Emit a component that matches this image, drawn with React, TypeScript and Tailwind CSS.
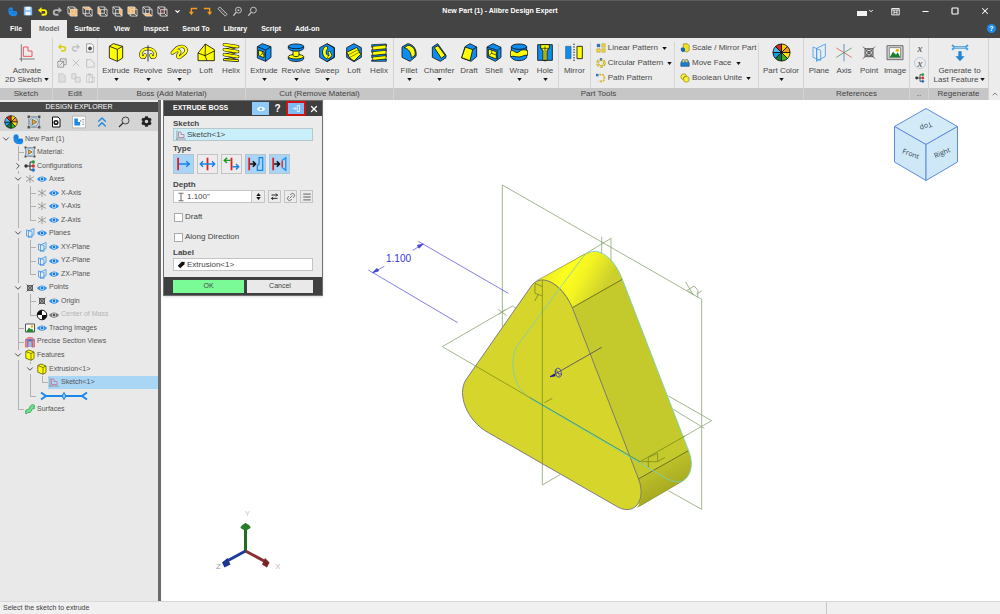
import React, { type ReactNode } from "react";
import { ChevronDown, ChevronRight, ChevronUp, ChevronsUp, Link2, Menu, Minus, Square, X } from "lucide-react";
import { FaCog } from "react-icons/fa";

const Y = "#ffff00";
const B = "#0d8df0";
const K = "#111";

/* ---------- large ribbon icons ---------- */

function Big({ children }: { children: ReactNode }) {
  return (
    <svg viewBox="0 0 54 57" className="w-[18px] h-[19px] shrink-0" fill="none" stroke={K} strokeWidth="2.5" strokeLinejoin="round">
      {children}
    </svg>
  );
}

const tube = (d: string, outer = 13, inner = 8, color = Y) => (
  <>
    <path d={d} stroke={K} strokeWidth={outer} strokeLinecap="round" />
    <path d={d} stroke={color} strokeWidth={inner} strokeLinecap="round" />
  </>
);

const icons = {
  sketch: (
    <Big>
      <path d="M10 4V56M4 48H50" stroke="#666" />
      <path d="M16 12H30V24H42V40H16Z" stroke="#e8555e" strokeWidth="3" />
    </Big>
  ),
  extrude: (
    <Big>
      <path d="M7 10L19 2L47 10V45L31 55L7 45Z" fill={Y} />
      <path d="M7 10L31 19V55M31 19L47 10" />
    </Big>
  ),
  revolve: (
    <Big>
      {tube("M18 36C18 47 5 45 5 34C8 11 46 11 49 34C49 45 36 47 36 36", 10, 7)}
      <path d="M27 7V55" strokeWidth="2.5" />
    </Big>
  ),
  sweep: (
    <Big>
      {tube("M7 30L19 23C28 20 32 27 26 33C20 40 26 48 32 41L46 29C52 18 44 10 36 10C26 10 16 16 7 30", 10, 7)}
    </Big>
  ),
  loft: (
    <Big>
      <path d="M3 30L25 3L52 20V53H3Z" fill={Y} />
      <path d="M3 30L24 38L30 53M24 38L52 24M25 3V20L24 38" />
    </Big>
  ),
  helix: (
    <Big>
      <path d="M47 11L8 21M47 26L8 36M47 41L8 51" stroke={K} strokeWidth="7" />
      <path d="M47 11L8 21M47 26L8 36M47 41L8 51" stroke={Y} strokeWidth="3" />
      {tube("M7 5L47 11", 10, 7)}
      {tube("M7 20L47 26", 10, 7)}
      {tube("M7 35L47 41", 10, 7)}
      {tube("M7 50L47 53", 8, 4)}
    </Big>
  ),
  cutExtrude: (
    <Big>
      <path d="M7 11L22 2L48 11V43L32 55L7 45Z" fill={B} />
      <path d="M7 11L32 21V55M32 21L48 11" />
      <path d="M11 21L27 27V44L11 38Z" fill={Y} />
      <path d="M16 37L22 32M22 26V32L27 34" strokeWidth="2" />
    </Big>
  ),
  cutRevolve: (
    <Big>
      <path d="M4 42V48C10 58 44 58 50 48V42Z" fill={B} />
      <ellipse cx="27" cy="41" rx="23" ry="7" fill={Y} />
      <path d="M18 22V38C22 42 32 42 36 38V22Z" fill={Y} />
      <path d="M4 10V17C10 27 44 27 50 17V10Z" fill={B} />
      <ellipse cx="27" cy="10" rx="23" ry="7" fill={B} />
    </Big>
  ),
  cutSweep: (
    <Big>
      <path d="M5 14L27 2L49 14V43L27 56L5 43Z" fill={B} />
      {tube("M24 15C15 25 18 41 32 43", 12, 8)}
      {tube("M34 28L38 37L32 43", 8, 5)}
      <path d="M27 2L49 14V43L27 56" />
    </Big>
  ),
  cutLoft: (
    <Big>
      <path d="M5 14L27 2L49 14V43L27 56L5 43Z" fill={B} />
      <path d="M5 28L36 13L47 34L27 54L14 45Z" fill={Y} />
      <path d="M9 36L40 20M13 44L44 27" strokeWidth="1.5" />
    </Big>
  ),
  cutHelix: (
    <Big>
      <path d="M5 5L49 3V11L5 13ZM5 20L49 17V25L5 28ZM5 36L49 33V41L5 44ZM5 51L49 48V55H5Z" fill={B} strokeWidth="2" />
      <path d="M8 10L48 6V17L8 21ZM8 26L48 22V33L8 37ZM8 42L48 38V48L8 52Z" fill={Y} strokeWidth="2" />
    </Big>
  ),
  fillet: (
    <Big>
      <path d="M6 12L23 2C41 4 51 20 48 40L30 55L6 43Z" fill={B} />
      <path d="M12 14L24 7C38 8 48 20 45 37L34 45C34 29 26 17 12 14Z" fill={Y} />
    </Big>
  ),
  chamfer: (
    <Big>
      <path d="M7 12L23 2L48 37V44L31 55L7 43Z" fill={B} />
      <path d="M13 14L24 8L45 37L34 46Z" fill={Y} />
    </Big>
  ),
  draft: (
    <Big>
      <path d="M15 11L30 2L50 12V41L33 55L5 45Z" fill={B} />
      <path d="M16 12L38 20L30 53L5 44Z" fill={Y} />
      <path d="M38 20L50 12" />
    </Big>
  ),
  shell: (
    <Big>
      <path d="M6 12L24 2L48 13V43L31 55L6 43Z" fill={B} />
      <path d="M6 12L38 22V51M38 22L48 13" strokeWidth="2" />
      <path d="M10 18L34 26V48L10 39Z" fill={Y} />
      <path d="M10 39L20 31L34 36M20 31V22" strokeWidth="2" />
    </Big>
  ),
  wrap: (
    <Big>
      <path d="M4 12V44C12 56 42 56 50 44V12Z" fill={B} />
      <path d="M1 25C10 16 17 36 27 26C37 18 42 20 53 23V37C43 34 37 42 27 42C17 42 10 38 1 41Z" fill={Y} />
      <ellipse cx="27" cy="11" rx="23" ry="8" fill={B} />
    </Big>
  ),
  hole: (
    <Big>
      <path d="M5 5H49V52H5Z" fill={B} />
      <path d="M14 5H40V16L33 22V52H21V22L14 16Z" fill={Y} />
      <path d="M14 16H40M27 10V56" strokeWidth="2" />
    </Big>
  ),
  mirror: (
    <Big>
      <path d="M2 10H18V47H2Z" fill={B} stroke="#3b6f99" />
      <path d="M36 10H52V47H36Z" fill={Y} />
      <path d="M27 2V57" strokeDasharray="4 4" strokeWidth="3" />
    </Big>
  ),
  plane: (
    <Big>
      <path d="M9 12L32 22V52L9 43ZM20 16L46 3V40L20 55ZM20 16V55" stroke="#3d9cf0" />
    </Big>
  ),
  axis: (
    <Big>
      <path d="M27 3V55" stroke="#3b83bd" />
      <path d="M4 15L50 43" stroke="#de5a50" />
      <path d="M50 15L4 43" stroke="#4f9b6a" />
    </Big>
  ),
  point: (
    <Big>
      <path d="M9 11L45 47M45 11L9 47M15 17H39V41H15Z" stroke="#444" />
      <circle cx="27" cy="29" r="10" stroke="#444" />
      <circle cx="27" cy="29" r="4" stroke="#444" />
    </Big>
  ),
  image: (
    <Big>
      <path d="M3 8H51V50H3Z" fill="#d4d4d4" stroke="#555" />
      <path d="M10 14H44V44H10Z" fill="#fff" stroke="#777" />
      <path d="M11 43L21 26L30 35L35 28L43 43Z" fill="#16802b" stroke="none" />
      <circle cx="34" cy="22" r="5" fill="#f3b400" stroke="none" />
    </Big>
  ),
  generate: (
    <Big>
      <path d="M3 6L10 12H44L51 6M3 20L10 14H44L51 20" stroke="#4f9fdc" strokeWidth="6" />
      <path d="M11 13H43" stroke="#a9d3f2" strokeWidth="3" />
      <path d="M22 25H32V40H41L27 55L13 40H22Z" fill="#2584d5" stroke="none" />
    </Big>
  ),
};

function Wheel({ className }: { className: string }) {
  const colors = ["#f4d400", "#f59a1b", "#ffe100", "#40b020", "#0f7a38", "#149ae0", "#4cb9ec", "#d2271b"];
  return (
    <svg viewBox="-10 -10 20 20" className={className} stroke={K} strokeWidth="0.9">
      {colors.map((c, i) => (
        <path key={i} d="M0 0L0 -9A9 9 0 0 1 6.36 -6.36Z" fill={c} transform={`rotate(${i * 45})`} />
      ))}
    </svg>
  );
}

/* ---------- small icons, 12 unit grid ---------- */

function Sm({ children, className = "w-3 h-3" }: { children: ReactNode; className?: string }) {
  return (
    <svg viewBox="0 0 12 12" className={`${className} shrink-0`} fill="none" stroke={K} strokeWidth="1" strokeLinejoin="round">
      {children}
    </svg>
  );
}

const PartLogo = ({ className }: { className?: string }) => (
  <Sm className={className}>
    <path d="M1.5 3.5C2 1 5.5 .5 6.5 3V5.5L10 5.5C12 7 11.5 10.5 9 11.2L5 11C2.5 10 1.5 8 1.5 6Z" fill="#1e88e5" stroke="none" />
    <path d="M2 4.2C4 5.2 5.5 4.5 6.5 3.4M5.5 7C7 8 9 7.5 10.5 6.2" stroke="#0d62b8" strokeWidth=".6" />
  </Sm>
);

const Undo = ({ color, className }: { color: string; className?: string }) => (
  <Sm className={className}>
    <path d="M3 4.5H7.5C11 4.5 11 9.5 7.5 9.5H5" stroke={color} strokeWidth="2" />
    <path d="M5 1L1 4.5L5 8Z" fill={color} stroke="none" />
  </Sm>
);
const Redo = ({ color, className }: { color: string; className?: string }) => (
  <Sm className={className}>
    <path d="M9 4.5H4.5C1 4.5 1 9.5 4.5 9.5H7" stroke={color} strokeWidth="2" />
    <path d="M7 1L11 4.5L7 8Z" fill={color} stroke="none" />
  </Sm>
);

const cubeFaces = [
  "M3 3H11V11H3Z",
  "M1 1H8L11 4H4Z",
  "M1 1L4 4V11L1 8Z",
  "M8 1L11 4V11L8 8Z",
  "M1 1H9V9H1Z",
  "M1 8H8L11 11H4Z",
  "",
];
const Cube = ({ face }: { face: string }) => (
  <Sm className="w-[11px] h-[11px]">
    <path d={face || "M4 3H8V8H4Z"} fill={face ? "#ffb45a" : "#7d3b40"} stroke="none" />
    <path d="M1 1H8V8H1ZM4 4H11V11H4ZM1 1L4 4M8 1L11 4M1 8L4 11M8 8L11 11" stroke="#dcdcdc" strokeWidth=".9" />
  </Sm>
);

const Material = ({ className }: { className?: string }) => (
  <Sm className={className}>
    <path d="M1.5 1.5H10.5V10.5H1.5Z" stroke="#8b8b8b" strokeWidth=".8" />
    <circle cx="6" cy="6" r="3.8" stroke="#5ba5de" strokeWidth=".8" />
    <path d="M4.5 3.8L8.3 6L4.5 8.2Z" fill="#f0ae2e" stroke="#6d4c10" strokeWidth=".6" />
    <path d="M.5 .5H2.5V2.5H.5ZM9.5 .5H11.5V2.5H9.5ZM.5 9.5H2.5V11.5H.5ZM9.5 9.5H11.5V11.5H9.5Z" fill="#555" stroke="none" />
  </Sm>
);
const Config = ({ className }: { className?: string }) => (
  <Sm className={className}>
    <path d="M2 6H6M8 2H6V10H8M6 6H8" stroke="#333" />
    <circle cx="2" cy="6" r="1.7" fill="#333" stroke="none" />
    <circle cx="9.3" cy="2" r="1.7" fill="#2f9a3c" stroke="none" />
    <circle cx="9.3" cy="6" r="1.7" fill="#d13438" stroke="none" />
    <circle cx="9.3" cy="10" r="1.7" fill="#2374c6" stroke="none" />
  </Sm>
);
const AxisSm = () => (
  <Sm>
    <path d="M6 2V10" stroke="#8a8a8a" strokeWidth=".8" />
    <path d="M2 3.5L10 8.5" stroke="#a07f7f" strokeWidth=".8" />
    <path d="M10 3.5L2 8.5" stroke="#7f9a85" strokeWidth=".8" />
  </Sm>
);
const PlaneSm = () => (
  <Sm>
    <path d="M2.5 3L8 4.5V10.5L2.5 9ZM4.5 4L10 1.5V7.5L4.5 10.5Z" stroke="#3a93e6" strokeWidth=".8" />
  </Sm>
);
const PointSm = () => (
  <Sm>
    <path d="M3.5 3.5H8.5V8.5H3.5ZM2.5 2.5L9.5 9.5M9.5 2.5L2.5 9.5" stroke="#444" strokeWidth=".8" />
    <circle cx="6" cy="6" r="2" stroke="#444" strokeWidth=".7" />
  </Sm>
);
const Mass = () => (
  <Sm>
    <circle cx="6" cy="6" r="4.8" fill="#fff" />
    <path d="M6 6V1.2A4.8 4.8 0 0 0 1.2 6ZM6 6V10.8A4.8 4.8 0 0 0 10.8 6Z" fill={K} stroke="none" />
  </Sm>
);
const ImageSm = () => (
  <Sm>
    <path d="M1.5 2H10.5V10H1.5Z" fill="#fff" stroke="#555" />
    <path d="M2 10L5 5.5L7 7.5L8 6.5L10 10Z" fill="#1c8b31" stroke="none" />
    <circle cx="8" cy="4.5" r="1.2" fill="#f3a400" stroke="none" />
  </Sm>
);
const SectionSm = () => (
  <Sm>
    <path d="M1.5 11V4C3 .5 9 .5 10.5 4V11H8V5H4V11Z" fill="#ef8b91" stroke="#d2525a" strokeWidth=".7" />
    <path d="M4 11V4H8V11M6 3V11M1.5 4H10.5" stroke="#3a6fd0" strokeWidth=".8" />
  </Sm>
);
const FeatureSm = () => (
  <Sm>
    <path d="M1.8 2.5L5 1L10 3V9.5L7 11.3L1.8 9.2Z" fill={Y} stroke="#5d5a08" strokeWidth=".8" />
    <path d="M1.8 2.5L7 4.5V11.3M7 4.5L10 3" stroke="#5d5a08" strokeWidth=".8" />
  </Sm>
);
const SketchSm = () => (
  <Sm>
    <path d="M2 1.5V11M1 10H11" stroke="#8a8a8a" strokeWidth=".8" />
    <path d="M3.5 3H6V5.5H9V8.5H3.5Z" stroke="#c77a9c" strokeWidth=".9" />
  </Sm>
);
const SurfaceSm = () => (
  <Sm>
    <path d="M1.5 8C2.5 5.5 4.5 7.5 5.5 5C6.5 1.5 9 1 10.5 2.5L10 6C9 5 8 5.5 7.5 8C6 10.5 4 8.5 2 11Z" fill="#6fe08b" stroke="#2b9a4a" strokeWidth=".8" />
  </Sm>
);
const Sheet = ({ x }: { x?: boolean }) => (
  <Sm className="w-[10px] h-[10px]">
    <path d="M2 1H8L10 3V11H2Z" stroke={x ? "#888" : "#c8c8c8"} fill={x ? "#fff" : "#dedede"} />
    {x && <circle cx="6" cy="6.5" r="1.8" fill="#555" stroke="#333" />}
  </Sm>
);
const EyeSm = ({ dim }: { dim?: boolean }) => (
  <Sm>
    <path d="M1 6C3.5 2.5 8.5 2.5 11 6C8.5 9.5 3.5 9.5 1 6Z" fill={dim ? "#777" : "#2f8fec"} stroke="none" />
    <circle cx="6" cy="6" r="2.1" fill="#e6f2fc" stroke="none" />
    <circle cx="6" cy="6" r="1.4" fill={dim ? "#555" : "#1877d6"} stroke="none" />
  </Sm>
);

const Caret = () => (
  <svg viewBox="0 0 6 4" className="w-[5px] h-[3px] shrink-0" fill="#111">
    <path d="M0 0H6L3 4Z" />
  </svg>
);

/* ---------- ribbon ---------- */

type Tool = { label: string; icon: ReactNode; width: string; menu?: boolean };

const boss: Tool[] = [
  { label: "Extrude", icon: icons.extrude, width: "w-8", menu: true },
  { label: "Revolve", icon: icons.revolve, width: "w-8", menu: true },
  { label: "Sweep", icon: icons.sweep, width: "w-[30px]", menu: true },
  { label: "Loft", icon: icons.loft, width: "w-6" },
  { label: "Helix", icon: icons.helix, width: "w-[26px]" },
];
const cut: Tool[] = [
  { label: "Extrude", icon: icons.cutExtrude, width: "w-8", menu: true },
  { label: "Revolve", icon: icons.cutRevolve, width: "w-8", menu: true },
  { label: "Sweep", icon: icons.cutSweep, width: "w-[30px]", menu: true },
  { label: "Loft", icon: icons.cutLoft, width: "w-6" },
  { label: "Helix", icon: icons.cutHelix, width: "w-[26px]" },
];
const partTools: Tool[] = [
  { label: "Fillet", icon: icons.fillet, width: "w-[26px]", menu: true },
  { label: "Chamfer", icon: icons.chamfer, width: "w-[34px]", menu: true },
  { label: "Draft", icon: icons.draft, width: "w-[26px]" },
  { label: "Shell", icon: icons.shell, width: "w-6" },
  { label: "Wrap", icon: icons.wrap, width: "w-[26px]", menu: true },
  { label: "Hole", icon: icons.hole, width: "w-[26px]", menu: true },
];
const references: Tool[] = [
  { label: "Plane", icon: icons.plane, width: "w-[26px]" },
  { label: "Axis", icon: icons.axis, width: "w-6" },
  { label: "Point", icon: icons.point, width: "w-[26px]" },
  { label: "Image", icon: icons.image, width: "w-[26px]" },
];

function ToolButton({ tool }: { tool: Tool }) {
  return (
    <button className={`${tool.width} shrink-0 flex flex-col items-center hover:bg-sky-100`}>
      {tool.icon}
      <span className="mt-1 leading-[9px] whitespace-nowrap">{tool.label}</span>
      <span className="h-[9px] flex items-center">{tool.menu && <Caret />}</span>
    </button>
  );
}

function Group({ label, width, children }: { label: string; width: string; children: ReactNode }) {
  return (
    <section className={`${width} shrink-0 flex flex-col border-r border-[#d3d3d3]`}>
      <div className="flex-1 flex pt-[5px] pl-[2px]">{children}</div>
      <h2 className="h-3 bg-[#c6c6c6] text-center leading-[12px] text-[#444]">{label}</h2>
    </section>
  );
}

function ListTools({ items, width }: { items: { label: string; icon: ReactNode; menu?: boolean }[]; width: string }) {
  return (
    <div className={`${width} flex flex-col gap-[3px] pl-[5px] -mt-px border-l border-[#d6d6d6]`}>
      {items.map((it) => (
        <button key={it.label} className="h-3 flex items-center whitespace-nowrap">
          {it.icon}
          <span className="ml-[2px] mr-1">{it.label}</span>
          {it.menu && <Caret />}
        </button>
      ))}
    </div>
  );
}

const patterns = [
  {
    label: "Linear Pattern",
    menu: true,
    icon: <Sm className="w-[10px] h-[10px]"><path d="M1 1H5V5H1Z" fill="#2d72c4" stroke="none" /><path d="M7 1H11V5H7ZM1 7H5V11H1ZM7 7H11V11H7Z" fill="#f5dc3c" stroke="#a88d1a" strokeWidth=".6" /></Sm>,
  },
  {
    label: "Circular Pattern",
    menu: true,
    icon: <Sm className="w-[10px] h-[10px]"><circle cx="6" cy="6" r="4" stroke="#9b8517" strokeWidth="3" strokeDasharray="3 1.2" /><circle cx="6" cy="6" r="4" stroke="#f5e03c" strokeWidth="1.8" strokeDasharray="3 1.2" /><path d="M5 0H7V3H5Z" fill="#2d72c4" stroke="none" /></Sm>,
  },
  {
    label: "Path Pattern",
    icon: <Sm className="w-[10px] h-[10px]"><path d="M4 2H7C11 2 11 10 7 10H3" stroke="#d9b32c" strokeWidth="2.2" strokeDasharray="2.4 1" /><path d="M0 1H3V4H0Z" fill="#2d72c4" stroke="none" /></Sm>,
  },
];
const modify = [
  {
    label: "Scale / Mirror Part",
    icon: <Sm className="w-[10px] h-[10px]"><path d="M4 1L9 1L11 3V9L8 11L4 9Z" fill="#f1e21d" stroke="#7a7510" strokeWidth=".7" /><path d="M1 6L4 5L6 7V10L3 11L1 9Z" fill="#1767b8" stroke="none" /></Sm>,
  },
  {
    label: "Move Face",
    menu: true,
    icon: <Sm className="w-[10px] h-[10px]"><path d="M1 6L3 2H5V5H7V2H9L11 6V10H1Z" fill="#1c7dd0" stroke="#15406e" strokeWidth=".7" /><path d="M3 2H5V5H3ZM7 2H9V5H7Z" fill="#f2d64a" stroke="none" /></Sm>,
  },
  {
    label: "Boolean Unite",
    menu: true,
    icon: <Sm className="w-[10px] h-[10px]"><circle cx="4.5" cy="4.5" r="3.5" fill="#f8f03a" stroke="#8d8612" strokeWidth=".8" /><circle cx="7.5" cy="7.5" r="3.5" fill="#f8f03a" stroke="#8d8612" strokeWidth=".8" /><path d="M4 7.5C4 5.5 5.5 4 7.5 4" stroke="#8d8612" strokeWidth=".8" /></Sm>,
  },
];

const editIcons = [
  <Undo color="#d6cf1b" className="w-[10px] h-[10px]" />,
  <Redo color="#c4c4c4" className="w-[10px] h-[10px]" />,
  <Sheet x />,
  <Sm className="w-[10px] h-[10px]"><path d="M1 4H8V11H1ZM4 4V1H11V8H8M3 9L9 3" stroke="#8c8c8c" /></Sm>,
  <Sm className="w-[10px] h-[10px]"><path d="M2 2L10 10M10 2L2 10" stroke="#bbb" /></Sm>,
  <Sm className="w-[10px] h-[10px]"><path d="M2 1V11H11V6L7 2H2" stroke="#bbb" /></Sm>,
  <Sheet />,
  <Sm className="w-[10px] h-[10px]"><path d="M1 1H6V7H1ZM5 5H11V11H5Z" stroke="#c4c4c4" fill="#e2e2e2" /></Sm>,
  <Sm className="w-[10px] h-[10px]"><path d="M2 2H9V11H2ZM4 1H7V3H4ZM5 5H11V11H5Z" stroke="#c4c4c4" fill="#eee" /></Sm>,
];

function Ribbon() {
  return (
    <div className="h-[62px] flex bg-[#ececec] text-[8px] text-[#4a4a4a]">
      <Group label="Sketch" width="w-[53px]">
        <button className="flex-1 flex flex-col items-center">
          {icons.sketch}
          <span className="mt-1 leading-[9px]">Activate</span>
          <span className="leading-[9px] flex items-center gap-[2px] whitespace-nowrap">2D Sketch <Caret /></span>
        </button>
      </Group>
      <Group label="Edit" width="w-[45px]">
        <div className="flex-1 -mt-px grid grid-cols-3 auto-rows-[12px] gap-y-[3px] justify-items-center items-center">
          {editIcons.map((icon, i) => (
            <button key={i} aria-label={`Edit tool ${i + 1}`}>{icon}</button>
          ))}
        </div>
      </Group>
      <Group label="Boss (Add Material)" width="w-[148px]">
        {boss.map((t) => <ToolButton key={t.label} tool={t} />)}
      </Group>
      <Group label="Cut (Remove Material)" width="w-[148px]">
        {cut.map((t) => <ToolButton key={t.label} tool={t} />)}
      </Group>
      <Group label="Part Tools" width="w-[410px]">
        {partTools.map((t) => <ToolButton key={t.label} tool={t} />)}
        <div className="w-8 flex justify-center border-l border-[#d6d6d6]">
          <ToolButton tool={{ label: "Mirror", icon: icons.mirror, width: "w-[30px]" }} />
        </div>
        <ListTools items={patterns} width="w-[85px]" />
        <ListTools items={modify} width="w-[84px]" />
        <div className="flex-1 flex justify-center border-l border-[#d6d6d6]">
          <ToolButton tool={{ label: "Part Color", icon: <Wheel className="w-[19px] h-[19px]" />, width: "w-[44px]", menu: true }} />
        </div>
      </Group>
      <Group label="References" width="w-[106px]">
        {references.map((t) => <ToolButton key={t.label} tool={t} />)}
      </Group>
      <Group label=".." width="w-[19px]">
        <div className="flex-1 flex flex-col items-center gap-[3px] -mt-px font-['Liberation_Serif',serif] italic text-[11px] leading-[11px]">
          <button className="h-3">x</button>
          <button className="w-3 h-3 rounded-full border border-[#bcd] leading-[8px]">x</button>
          <button className="h-3" aria-label="Configurations"><Config className="w-[10px] h-[10px]" /></button>
        </div>
      </Group>
      <Group label="Regenerate" width="w-[60px]">
        <button className="flex-1 flex flex-col items-center">
          {icons.generate}
          <span className="mt-1 leading-[9px]">Generate to</span>
          <span className="leading-[9px] flex items-center gap-[2px] whitespace-nowrap">Last Feature <Caret /></span>
        </button>
      </Group>
      <button className="flex-1 flex items-end justify-center pb-[2px]" aria-label="Collapse ribbon">
        <ChevronUp size={8} />
      </button>
    </div>
  );
}

/* ---------- title bar and tabs ---------- */

function TitleBar() {
  return (
    <header className="h-5 grid grid-cols-[1fr_auto_1fr] items-center bg-[#444] text-white border-t border-[#5c5c5c]">
      <div className="flex items-center pl-[5px] [&>*]:w-[15px] [&>*]:flex [&>*]:justify-center">
        <span><PartLogo className="w-[11px] h-[11px]" /></span>
        <button aria-label="Save"><Sm className="w-[10px] h-[10px]"><path d="M1 1H10L11 2V11H1Z" fill="#7cbcf0" stroke="none" /><path d="M3 1H9V5H3ZM3 7H9V11H3Z" fill="#eaf4fc" stroke="none" /></Sm></button>
        <button aria-label="Undo"><Undo color="#ffee00" className="w-[11px] h-[11px]" /></button>
        <button aria-label="Redo"><Redo color="#b5b5b5" className="w-[11px] h-[11px]" /></button>
        {cubeFaces.map((f, i) => <button key={i} aria-label={`View ${i + 1}`}><Cube face={f} /></button>)}
        <button aria-label="More views"><ChevronDown size={7} strokeWidth={4} /></button>
        <button aria-label="Previous"><Sm className="w-[10px] h-[10px]"><path d="M11 3H4V9" stroke="#f59a1c" strokeWidth="1.6" /><path d="M1 7H7L4 11Z" fill="#f59a1c" stroke="none" /></Sm></button>
        <button aria-label="Next"><Sm className="w-[10px] h-[10px]"><path d="M1 3H8V9" stroke="#f59a1c" strokeWidth="1.6" /><path d="M5 7H11L8 11Z" fill="#f59a1c" stroke="none" /></Sm></button>
        <button aria-label="Measure"><Sm className="w-[11px] h-[11px]"><path d="M3 1L11 9L9 11L1 3Z" stroke="#ccc" /><path d="M4 4L5 3M6 6L7 5M8 8L9 7" stroke="#ccc" strokeWidth=".8" /></Sm></button>
        <button aria-label="Zoom fit"><Sm className="w-[11px] h-[11px]"><circle cx="7" cy="4.5" r="3.2" stroke="#ccc" /><circle cx="7" cy="4.5" r="1" fill="#ccc" stroke="none" /><path d="M4.5 7L1.5 10.5" stroke="#ccc" strokeWidth="1.4" /></Sm></button>
        <button aria-label="Zoom"><Sm className="w-[11px] h-[11px]"><circle cx="7" cy="4.5" r="3.2" stroke="#ccc" /><path d="M4.5 7L1.5 10.5" stroke="#ccc" strokeWidth="1.4" /></Sm></button>
      </div>
      <h1 className="text-[7px] font-bold leading-5">New Part (1) - Alibre Design Expert</h1>
      <div className="flex justify-end [&>*]:w-[30px] [&>*]:flex [&>*]:justify-center [&>*]:items-center">
        <button aria-label="Display">
          <span className="w-[10px] h-[5px] mt-1 bg-[#f2f2f2]" />
          <ChevronDown size={6} strokeWidth={4} className="ml-px" />
        </button>
        <button aria-label="Ribbon options"><Sm className="w-[9px] h-[9px]"><path d="M1 2H11V10.5H1ZM1 4H11M4 4V10M8 4V10M4 7H8" stroke="#eee" strokeWidth="1.3" /></Sm></button>
        <button aria-label="Minimize"><Minus size={9} strokeWidth={3} /></button>
        <button aria-label="Maximize"><Square size={8} strokeWidth={3.5} /></button>
        <button aria-label="Close"><X size={10} strokeWidth={2.5} /></button>
      </div>
    </header>
  );
}

const tabs = ["File", "Model", "Surface", "View", "Inspect", "Send To", "Library", "Script", "Add-on"];

function Tabs() {
  return (
    <nav className="h-[18px] flex bg-[#444] pl-[3px] text-[7px] font-bold">
      {tabs.map((t) => (
        <button key={t} className={t === "Model" ? "ml-[2px] px-2 bg-[#ececec] text-[#666]" : "px-[7px] text-white"}>
          {t}
        </button>
      ))}
      <button className="ml-auto mt-1 mr-[4px] w-[9px] h-[9px] rounded-full bg-[#1e8be6] text-white leading-[9px]" aria-label="Help">?</button>
    </nav>
  );
}

/* ---------- design explorer ---------- */

// guides: one letter per indent column
// v = line through, t = tee, l = last branch
// r = root node, o = open node, c = closed node
type Row = { guides: string; label: string; icon: ReactNode; eye?: "on" | "dim"; selected?: boolean };

const rows: Row[] = [
  { guides: "r", label: "New Part (1)", icon: <PartLogo /> },
  { guides: " t", label: "Material:", icon: <Material /> },
  { guides: " c", label: "Configurations", icon: <Config /> },
  { guides: " o", label: "Axes", icon: <AxisSm />, eye: "on" },
  { guides: " vt", label: "X-Axis", icon: <AxisSm />, eye: "on" },
  { guides: " vt", label: "Y-Axis", icon: <AxisSm />, eye: "on" },
  { guides: " vl", label: "Z-Axis", icon: <AxisSm />, eye: "on" },
  { guides: " o", label: "Planes", icon: <PlaneSm />, eye: "on" },
  { guides: " vt", label: "XY-Plane", icon: <PlaneSm />, eye: "on" },
  { guides: " vt", label: "YZ-Plane", icon: <PlaneSm />, eye: "on" },
  { guides: " vl", label: "ZX-Plane", icon: <PlaneSm />, eye: "on" },
  { guides: " o", label: "Points", icon: <PointSm />, eye: "on" },
  { guides: " vt", label: "Origin", icon: <PointSm />, eye: "on" },
  { guides: " vl", label: "Center of Mass", icon: <Mass />, eye: "dim" },
  { guides: " t", label: "Tracing Images", icon: <ImageSm />, eye: "on" },
  { guides: " t", label: "Precise Section Views", icon: <SectionSm /> },
  { guides: " o", label: "Features", icon: <FeatureSm /> },
  { guides: " vo", label: "Extrusion<1>", icon: <FeatureSm /> },
  { guides: " vvl", label: "Sketch<1>", icon: <SketchSm />, selected: true },
  {
    guides: " vl",
    label: "",
    icon: (
      <svg viewBox="0 0 48 12" className="w-12 h-3 ml-1" stroke="#1787ea" strokeWidth="2" fill="none">
        <path d="M6 6H42M1 2.5L6 6L1 9.5M47 2.5L42 6L47 9.5" />
        <path d="M24 2.5L26 6L24 9.5L22 6Z" fill="#7cc0f8" strokeWidth="1" />
      </svg>
    ),
  },
  { guides: " l", label: "Surfaces", icon: <SurfaceSm /> },
];

function Guide({ kind }: { kind: string }) {
  const Chevron = kind === "c" ? ChevronRight : ChevronDown;
  return (
    <span className="w-3 shrink-0 flex flex-col items-center relative">
      {"vt".includes(kind) && <span className="flex-1 w-px bg-[#b0b0b0]" />}
      {kind === "l" && <span className="h-1/2 w-px bg-[#b0b0b0]" />}
      {"tl".includes(kind) && <span className="absolute top-1/2 left-[6px] w-[6px] h-px bg-[#b0b0b0]" />}
      {kind === "r" && <ChevronDown size={10} className="my-auto text-[#333]" />}
      {"oc".includes(kind) && (
        <>
          <span className="flex-1 w-px bg-[#b0b0b0]" />
          <Chevron size={10} className="text-[#333]" />
          <span className="flex-1 w-px bg-[#b0b0b0]" />
        </>
      )}
    </span>
  );
}

const explorerTools = [
  <Wheel className="w-[14px] h-[14px]" />,
  <Material className="w-[14px] h-[14px]" />,
  <Sm><path d="M2.5 1H8L10 3V11H2.5Z" fill="#fff" /><circle cx="6" cy="6.5" r="1.8" strokeWidth="1.5" /></Sm>,
  <Sm className="w-[14px] h-[14px]"><path d="M.5 1H11.5V11H.5Z" fill="#fff" stroke="#999" strokeWidth=".5" /><path d="M2 3H5V6H7V9H2Z" fill="#1e88e5" stroke="none" /><path d="M7 5H8M9 4H10M9 6H10M9 8H10" stroke="#777" /></Sm>,
  <ChevronsUp size={16} className="text-[#1e88e5]" />,
  <Sm><circle cx="7.5" cy="4.5" r="3.5" stroke="#333" strokeWidth=".9" /><path d="M5 7L1 11" stroke="#333" strokeWidth="1.3" /></Sm>,
  <FaCog size={11} />,
];

function Explorer() {
  return (
    <aside className="w-[161px] shrink-0 flex flex-col bg-[#e9e9e9] border-r-[3px] border-[#6b6b6b] text-[7px] text-[#555]">
      <h2 className="mt-[2px] h-[10px] leading-[10px] bg-[#484848] text-center text-white">DESIGN EXPLORER</h2>
      <div className="h-[19px] flex items-center bg-[#d4d4d4] text-[#222]">
        {explorerTools.map((icon, i) => (
          <button key={i} className="flex-1 flex justify-center" aria-label={`Explorer tool ${i + 1}`}>{icon}</button>
        ))}
      </div>
      <ul className="mt-px h-[284px] flex flex-col">
        {rows.map((r, i) => (
          <li key={i} className="flex-1 flex">
            {r.guides.split("").map((g, j) => <Guide key={j} kind={g} />)}
            <div className={r.selected ? "flex-1 flex items-center bg-[#aad6f5]" : "flex-1 flex items-center"}>
              {r.icon}
              {r.eye && <EyeSm dim={r.eye === "dim"} />}
              <span className={r.eye === "dim" ? "ml-px text-[#b4b4b4] whitespace-nowrap" : "ml-px whitespace-nowrap"}>{r.label}</span>
            </div>
          </li>
        ))}
      </ul>
    </aside>
  );
}

/* ---------- extrude dialog ---------- */

const typeIcons = [
  { label: "To depth", on: true, art: <><path d="M4 3V17" stroke="#e02020" strokeWidth="2" /><path d="M5 10H16M13 7L16.5 10L13 13" stroke="#1684e6" strokeWidth="1.6" /></> },
  { label: "Mid plane", on: false, art: <><path d="M10 3V17" stroke="#e02020" strokeWidth="2" /><path d="M2 10H18M5 7L2 10L5 13M15 7L18 10L15 13" stroke="#1684e6" strokeWidth="1.6" /></> },
  { label: "Two directions", on: false, art: <><path d="M10 3V17" stroke="#e02020" strokeWidth="2" /><path d="M9 6H2M5 3L2 6L5 9" stroke="#159a1d" strokeWidth="1.6" /><path d="M11 13H17M15 10L18 13L15 16" stroke="#1684e6" strokeWidth="1.6" /></> },
  { label: "To geometry", on: true, art: <><path d="M3 3V17" stroke="#e02020" strokeWidth="2" /><path d="M4 10H10M7 7L10 10L7 13" stroke="#111" strokeWidth="1.8" /><path d="M18 3V17H12V12L14 10V3Z" stroke="#1684e6" strokeWidth="1.3" /></> },
  { label: "To next", on: true, art: <><path d="M3 3V17" stroke="#e02020" strokeWidth="2" /><path d="M4 10H10M7 7L10 10L7 13" stroke="#111" strokeWidth="1.8" /><path d="M13 6V14" stroke="#e02020" strokeWidth="1.5" /><path d="M13 6L17 3V17L13 14" stroke="#1684e6" strokeWidth="1.3" /></> },
];

function ExtrudeDialog() {
  return (
    <form
      className="absolute top-0 left-[2px] w-40 border border-[#6f6f6f] bg-[#ebebeb] text-[8px] text-[#444] shadow-sm"
      onSubmit={(e) => e.preventDefault()}
    >
      <div className="h-[15px] flex items-center bg-[#3f3f3f] text-white pl-[9px]">
        <h2 className="flex-1 font-bold text-[7px]">EXTRUDE BOSS</h2>
        <button type="button" className="w-[17px] h-[13px] flex items-center justify-center bg-[#8fcaf8]" aria-label="Preview">
          <Sm className="w-[10px] h-[10px]"><path d="M1 6C3.5 2.5 8.5 2.5 11 6C8.5 9.5 3.5 9.5 1 6Z" fill="#fff" stroke="none" /><circle cx="6" cy="6" r="1.6" fill="#6fb6ee" stroke="none" /></Sm>
        </button>
        <button type="button" className="w-[17px] font-bold text-[10px] leading-[13px]">?</button>
        <button type="button" className="w-5 h-[15px] flex items-center justify-center bg-[#7dbdf5] border-2 border-[#cf1313]" aria-label="Dock">
          <Sm className="w-[11px] h-[9px]"><path d="M1 6H5M3.5 4L5.5 6L3.5 8M7 2H10V10H7Z" stroke="#fff" /></Sm>
        </button>
        <button type="button" className="w-4 flex justify-center" aria-label="Close dialog"><X size={10} strokeWidth={3} /></button>
      </div>

      <div className="px-[9px] pt-1">
        <label htmlFor="sketch" className="block font-bold leading-[8px]">Sketch</label>
        <div className="h-[13px] flex items-center bg-[#c9effb] border border-[#b9c6cc] pl-px">
          <SketchSm />
          <input id="sketch" readOnly defaultValue="Sketch<1>" className="flex-1 min-w-0 bg-transparent outline-none" />
        </div>

        <div className="mt-1 font-bold leading-[8px]">Type</div>
        <div className="mt-px flex gap-[3px]">
          {typeIcons.map((t) => (
            <button key={t.label} type="button" aria-label={t.label} className={t.on ? "w-[21px] h-5 border border-[#b5c4cf] bg-[#a8d4f7]" : "w-[21px] h-5 border border-[#c4c4c4] bg-[#ececec]"}>
              <svg viewBox="0 0 20 20" className="w-full h-full" fill="none">{t.art}</svg>
            </button>
          ))}
        </div>

        <label htmlFor="depth" className="block mt-[7px] font-bold leading-[8px]">Depth</label>
        <div className="mt-px h-[13px] flex gap-[3px]">
          <div className="flex-1 min-w-0 flex items-center border border-[#c4c4c4] bg-white">
            <Sm className="w-[10px] h-[10px] ml-[2px]"><path d="M3 1.5H9M3 10.5H9M6 1.5V10.5" stroke="#555" /></Sm>
            <input id="depth" defaultValue={'1.100"'} className="flex-1 min-w-0 ml-px outline-none" />
            <button type="button" aria-label="Step depth" className="w-[13px] h-full border-l border-[#c4c4c4] bg-[#ececec] flex flex-col items-center justify-evenly">
              <span className="rotate-180"><Caret /></span>
              <Caret />
            </button>
          </div>
          <button type="button" aria-label="Reverse" className="w-[13px] shrink-0 flex items-center justify-center border border-[#c4c4c4]"><Sm className="w-[9px] h-[9px]"><path d="M2 4H10M8 2L10 4L8 6M10 8.5H2M4 6.5L2 8.5L4 10.5" strokeWidth="1.2" /></Sm></button>
          <button type="button" aria-label="Link" className="w-[13px] shrink-0 flex items-center justify-center border border-[#c4c4c4]"><Link2 size={10} className="-rotate-45 text-[#666]" /></button>
          <button type="button" aria-label="Options" className="w-[13px] shrink-0 flex items-center justify-center border border-[#c4c4c4]"><Menu size={10} /></button>
        </div>

        <label className="mt-[9px] h-[10px] flex items-center gap-[2px]">
          <input type="checkbox" className="appearance-none w-[9px] h-[9px] ml-px border border-[#aaa] bg-white checked:bg-sky-500" />
          Draft
        </label>
        <label className="mt-[10px] h-[10px] flex items-center gap-[2px]">
          <input type="checkbox" className="appearance-none w-[9px] h-[9px] ml-px border border-[#aaa] bg-white checked:bg-sky-500" />
          Along Direction
        </label>

        <label htmlFor="label" className="block mt-[7px] font-bold leading-[8px]">Label</label>
        <div className="mt-px h-[13px] flex items-center border border-[#c4c4c4] bg-white pl-[2px]">
          <Sm className="w-[10px] h-[10px]"><path d="M2 7L7 2L10.5 2.5L10 5.5L5 10Z" fill="#111" stroke="none" /></Sm>
          <input id="label" defaultValue="Extrusion<1>" className="flex-1 min-w-0 ml-px outline-none" />
        </div>
      </div>

      <div className="mt-[6px] h-[18px] flex gap-[3px] items-center bg-[#3f3f3f] px-[9px] text-[7px]">
        <button className="flex-1 h-[13px] bg-[#7bfb97]">OK</button>
        <button type="button" className="w-[66px] h-[13px] bg-[#e9e9e9]">Cancel</button>
      </div>
    </form>
  );
}

/* ---------- model view ---------- */

function Viewport() {
  return (
    <main className="relative flex-1 min-w-0 bg-white">
      <svg viewBox="161 100 839 501" className="absolute inset-0 w-full h-full" fill="none">
        <defs>
          <linearGradient id="top" x1="560" y1="290" x2="720" y2="380" gradientUnits="userSpaceOnUse">
            <stop offset="0" stopColor="#eaea22" />
            <stop offset=".35" stopColor="#ffff1e" />
            <stop offset=".6" stopColor="#f3f322" />
            <stop offset="1" stopColor="#cdd02c" />
          </linearGradient>
          <linearGradient id="low" x1="870" y1="890" x2="920" y2="985" gradientUnits="userSpaceOnUse">
            <stop offset="0" stopColor="#bfc42a" />
            <stop offset="1" stopColor="#a3a51e" />
          </linearGradient>
        </defs>

        <g transform="translate(360 170) scale(0.33333)" strokeWidth="2.5">
          {/* reference planes behind the solid */}
          <path
            d="M427 470V45L1025 388V1018L925 962M490 428L457 408L247 530L345 587M547 330L753 205V282M725 200V255M547 885V945L600 914M925 678L1055 752L840 875M940 718L1033 775M415 418L440 437M417 433L437 418"
            stroke="#8fa878"
          />
          <path d="M977 336L1000 375M980 362L1003 348L1014 362L1013 382M1010 372L1025 363M985 363L1003 375" stroke="#8fa878" />

          {/* solid */}
          <path d="M522 338L675 252C720 228 765 270 787 328L985 840C1004 885 990 920 968 933L838 1007L637 413Z" fill="#c4ca2c" />
          <path d="M520 340L675 252C720 228 765 270 787 328L637 413C615 350 560 310 520 340Z" fill="url(#top)" />
          <path d="M835 927L985 842C1004 885 990 920 968 933L830 1014C848 990 850 960 835 927Z" fill="url(#low)" />
          <path
            d="M516 345L318 629C290 672 320 752 385 788L775 1012C825 1037 860 990 835 925L637 413C610 350 550 305 516 345Z"
            fill="#d5d52b"
            stroke="#6a6a80"
          />
          <path d="M530 332L675 252M838 1009L968 933" stroke="#8c8a30" strokeWidth="2" />
          <path d="M637 413L787 328M835 927L985 842" stroke="#5f5f24" />

          {/* sketch outline */}
          <path
            d="M668 262L470 530C445 580 460 655 515 688L910 920C935 935 955 938 968 933C990 920 1004 885 985 840L787 328C765 270 725 235 692 246Q677 249 668 262Z"
            stroke="#74cfc0"
          />

          {/* plane edges showing through */}
          <path d="M547 330V885M345 587L510 683" stroke="#86931c" />
          <path d="M510 683L840 875" stroke="#3f9a6b" strokeWidth="3" />
          <path d="M840 875L975 798M553 698L577 685M525 340V370L547 378M525 340L547 350M536 372L524 393M845 875H893V850L865 862V892M893 875L915 862" stroke="#7f8c1c" />

          {/* depth handle */}
          <path d="M575 618L725 532" stroke="#4d4a63" />
          <ellipse cx="595" cy="608" rx="9" ry="14" stroke="#4848a0" transform="rotate(-12 595 608)" />
          <path d="M583 604L606 614M588 597L600 620" stroke="#4848a0" strokeWidth="2" />
          <path d="M570 620L584 612L585 618Z" fill="#1c1c90" stroke="#1c1c90" />

          {/* dimension */}
          <path d="M175 214L445 370M25 300L293 458M158 241L190 222M38 308L73 289" stroke="#6868e0" />
          <path d="M190 222L172 226L177 235ZM38 308L56 303L51 295Z" fill="#4040d8" stroke="#4040d8" strokeWidth="2" />
        </g>
        <text x="398.5" y="262" textAnchor="middle" fontSize="10" fill="#3434d6">1.100</text>

        {/* view cube */}
        <g stroke="#5f8ae0" strokeWidth="1" fill="#cfe8f7" strokeLinejoin="round">
          <path d="M926 108.5L957.5 126.5L926 144.5L894.5 126.5Z" fill="#d3ebf8" />
          <path d="M894.5 126.5L926 144.5V180.5L894.5 162Z" />
          <path d="M957.5 126.5L926 144.5V180.5L957.5 162Z" />
        </g>
        <g fontSize="7" fill="#2f4450" textAnchor="middle" fontFamily="Open Sans, sans-serif">
          <text transform="translate(910 156) rotate(20)">Front</text>
          <text transform="translate(943 155) rotate(-22)">Right</text>
          <text transform="translate(925 124) rotate(158)">Top</text>
        </g>

        {/* axis triad */}
        <g strokeWidth="3">
          <path d="M245.5 551V528" stroke="#246b22" />
          <path d="M240.5 528C240.5 525.5 245.5 523 245.5 523C245.5 523 251 525.5 250.5 528L245.5 531Z" fill="#2b7a28" />
          <path d="M245.5 551L265 561.5" stroke="#8c2f33" />
          <path d="M262 564.5L265 558L269.5 562.5L267 567.5Z" fill="#7a2428" />
          <path d="M245.5 551L228 560.5" stroke="#1d3a9c" />
          <path d="M230.5 564.5L227.5 558L222 562.5L224.5 567.5Z" fill="#1c3590" />
        </g>
        <g fontSize="8" textAnchor="middle">
          <text x="247.5" y="516" fill="#c4ccc4">Y</text>
          <text x="278" y="569" fill="#d6b4b4">X</text>
          <text x="218.5" y="568.5" fill="#8c9cc8">Z</text>
        </g>
      </svg>
      <ExtrudeDialog />
    </main>
  );
}

export default function App() {
  return (
    <div className="h-screen flex flex-col overflow-hidden bg-white font-['Liberation_Sans',Arial,sans-serif] antialiased">
      <TitleBar />
      <Tabs />
      <Ribbon />
      <div className="flex-1 min-h-0 flex">
        <Explorer />
        <Viewport />
      </div>
      <footer className="h-[13px] flex bg-[#f0f0f0] border-t border-[#d8d8d8] text-[7px] leading-[11px] text-[#444]">
        <p className="flex-1 pl-[3px]">Select the sketch to extrude</p>
        <div className="w-[174px] border-l border-[#c8c8c8]" />
      </footer>
    </div>
  );
}
